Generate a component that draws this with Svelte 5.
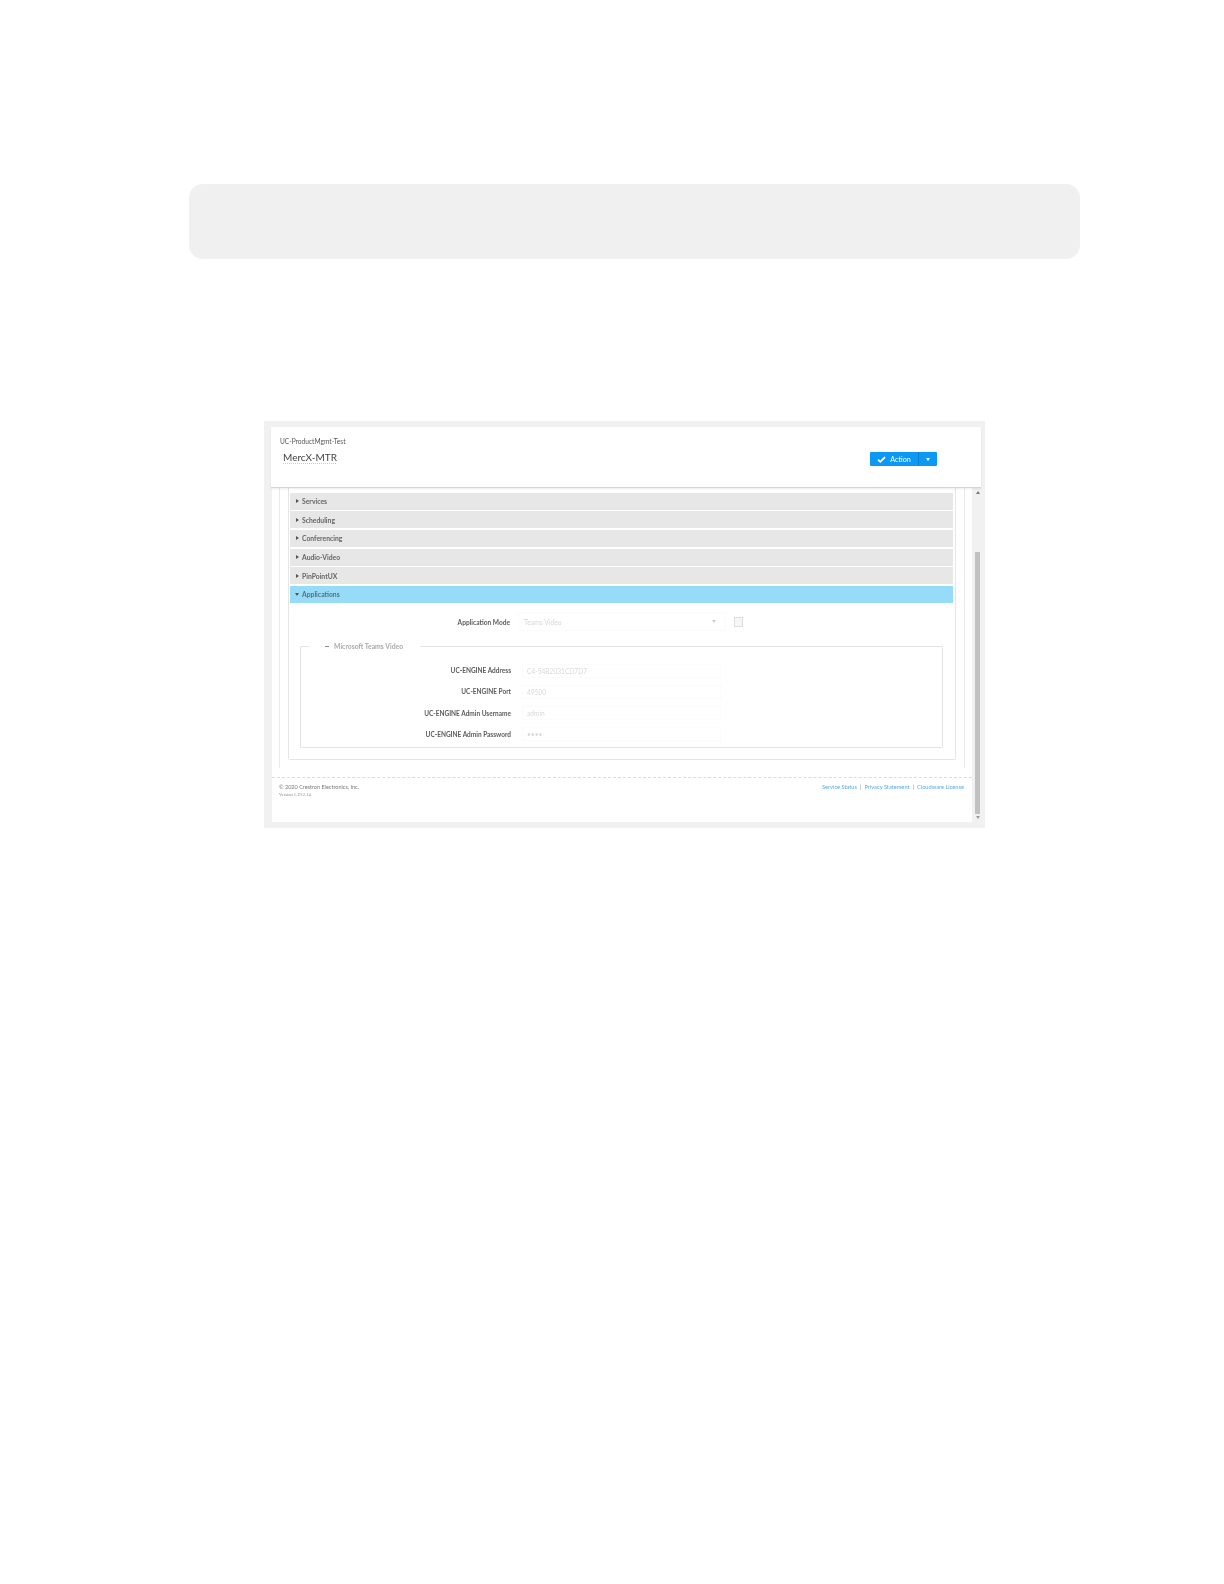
<script lang="ts">
    const sections = ["Services", "Scheduling", "Conferencing", "Audio-Video", "PinPointUX"];

    const fields = [
        { label: "UC-ENGINE Address", value: "C4-54B2031CD7D7" },
        { label: "UC-ENGINE Port", value: "49500" },
        { label: "UC-ENGINE Admin Username", value: "admin" },
        { label: "UC-ENGINE Admin Password", value: "••••" },
    ];
</script>

<div class="page">
    <div class="banner"></div>

    <div class="window">
        <div class="inner">
            <header class="header">
                <div class="titles">
                    <div class="group">UC-ProductMgmt-Test</div>
                    <div class="name"><span>MercX-MTR</span></div>
                </div>
                <div class="action">
                    <button class="action-main">
                        <svg width="9" height="7" viewBox="0 0 9 7">
                            <path d="M1 3.6 3.3 5.8 8 1.2" fill="none" stroke="#fff" stroke-width="1.8" />
                        </svg>
                        Action
                    </button>
                    <button class="action-more" aria-label="More actions"><i class="caret-down white"></i></button>
                </div>
            </header>

            <div class="body">
                <div class="content">
                    <div class="scroll-area">
                        <div class="panel">
                            {#each sections as section}
                                <div class="row"><i class="caret-right"></i>{section}</div>
                            {/each}
                            <div class="row active"><i class="caret-down"></i>Applications</div>

                            <div class="mode-row">
                                <span class="mode-label">Application Mode</span>
                                <div class="select">
                                    <span>Teams Video</span>
                                    <i class="caret-down faint"></i>
                                </div>
                                <input class="check" type="checkbox" disabled />
                            </div>

                            <fieldset class="group-box">
                                <legend>
                                    <span class="minus"></span>
                                    Microsoft Teams Video
                                </legend>
                                {#each fields as field}
                                    <div class="field">
                                        <label for={field.label}>{field.label}</label>
                                        <input id={field.label} value={field.value} readonly />
                                    </div>
                                {/each}
                            </fieldset>
                        </div>
                    </div>

                    <footer class="footer">
                        <div>
                            <div class="copyright">© 2020 Crestron Electronics, Inc.</div>
                            <div class="version">Version 1.19.2.14</div>
                        </div>
                        <div class="links">
                            <a href="#status">Service Status</a>
                            <span>|</span>
                            <a href="#privacy">Privacy Statement</a>
                            <span>|</span>
                            <a href="#license">Cloudware License</a>
                        </div>
                    </footer>
                </div>

                <div class="scrollbar">
                    <i class="arrow-up"></i>
                    <div class="thumb"></div>
                    <i class="arrow-down"></i>
                </div>
            </div>
        </div>
    </div>
</div>

<style>
    :global(body) {
        margin: 0;
        background: #fff;
    }

    .page {
        padding-top: 184px;
        font-family: Lato, "Open Sans", sans-serif;
    }

    .banner {
        margin-left: 189px;
        width: 891px;
        height: 75px;
        background: #f0f0f0;
        border-radius: 14px;
    }

    .window {
        margin: 162px 0 0 264px;
        width: 721px;
        height: 407px;
        box-sizing: border-box;
        padding: 6px 4px 6px 7px;
        background: #f1f1f1;
        filter: blur(0.5px);
    }

    .inner {
        height: 100%;
        display: flex;
        flex-direction: column;
    }

    .header {
        position: relative;
        z-index: 1;
        height: 61px;
        box-sizing: border-box;
        flex: none;
        display: flex;
        justify-content: space-between;
        padding: 9px 44px 0 9px;
        background: #fff;
        border-bottom: 1px solid #d4d4d4;
        box-shadow: 0 1px 2px rgba(0, 0, 0, 0.08);
    }

    .group {
        font-size: 6.6px;
        line-height: 11px;
        color: #555;
    }

    .name {
        margin: 2px 0 0 3px;
        font-size: 10px;
        line-height: 16px;
        color: #444;
    }

    .name span {
        text-decoration: underline dotted #a8d2ee 1px;
        text-underline-offset: 2px;
    }

    .action {
        display: flex;
        margin-top: 16px;
        height: 14px;
    }

    .action button {
        border: none;
        padding: 0;
        height: 14px;
        background: #0a99f5;
        color: #fff;
        font-family: inherit;
        font-size: 7.2px;
        font-weight: 400;
        display: flex;
        align-items: center;
        justify-content: center;
    }

    .action-main {
        width: 49px;
        gap: 4px;
        border-radius: 1px 0 0 1px;
        border-right: 1px solid #0c7fcb !important;
    }

    .action-more {
        width: 18px;
        border-radius: 0 1px 1px 0;
    }

    .body {
        flex: 1;
        display: flex;
        min-height: 0;
        padding-left: 1px;
    }

    .content {
        flex: 1;
        min-width: 0;
        background: #fff;
    }

    .scroll-area {
        height: 280px;
        box-sizing: border-box;
        margin: 0 7px;
        padding: 0 8px;
        border-left: 1px solid #e9e9e9;
        border-right: 1px solid #e9e9e9;
    }

    .panel {
        height: 272px;
        box-sizing: border-box;
        padding: 4.6px 2px 0 1px;
        border: 1px solid #e6e6e6;
        border-top: none;
        border-radius: 0 0 2px 2px;
    }

    .row {
        height: 17px;
        margin-bottom: 1.68px;
        padding-left: 6px;
        display: flex;
        align-items: center;
        gap: 3px;
        background: #e7e7e7;
        font-size: 6.8px;
        font-weight: 700;
        color: #666;
    }

    .row.active {
        margin-bottom: 0;
        padding-left: 5px;
        background: #96dbf7;
        color: #55707c;
        gap: 3px;
    }

    .caret-right {
        width: 0;
        height: 0;
        border-top: 2.5px solid transparent;
        border-bottom: 2.5px solid transparent;
        border-left: 3px solid #555;
    }

    .caret-down {
        width: 0;
        height: 0;
        border-left: 2.5px solid transparent;
        border-right: 2.5px solid transparent;
        border-top: 3px solid #555;
    }

    .caret-down.white {
        border-top-color: #fff;
    }

    .caret-down.faint {
        border-top-color: #ccc;
    }

    .mode-row {
        margin-top: 9px;
        height: 20px;
        display: flex;
        align-items: center;
    }

    .mode-label {
        width: 220px;
        text-align: right;
        font-size: 6.6px;
        font-weight: 700;
        color: #5c5c5c;
    }

    .select {
        margin-left: 8px;
        width: 208px;
        height: 19px;
        box-sizing: border-box;
        padding: 0 9px 0 5px;
        display: flex;
        align-items: center;
        justify-content: space-between;
        border: 1px solid #fbfbfb;
        font-size: 6.8px;
        color: #d8d8d8;
    }

    .check {
        appearance: none;
        margin: 0 0 0 8px;
        width: 9px;
        height: 10px;
        border: 1px solid #ddd;
        background: #f7f7f7;
    }

    .group-box {
        margin: 10px 0 0 10px;
        padding: 0;
        width: 643px;
        height: 106px;
        box-sizing: border-box;
        border: 1px solid #e4e4e4;
        border-radius: 1px;
    }

    legend {
        margin-left: 8px;
        padding: 0 17px 0 16px;
        font-size: 6.8px;
        font-weight: 700;
        line-height: 9px;
        color: #aaa;
        display: flex;
        align-items: center;
        gap: 5px;
    }

    .minus {
        width: 4px;
        height: 1px;
        background: #888;
    }

    .field {
        height: 21.1px;
        display: flex;
        align-items: center;
    }

    .field:first-of-type {
        margin-top: 9.4px;
    }

    .field label {
        width: 210px;
        text-align: right;
        font-size: 6.5px;
        font-weight: 700;
        color: #5c5c5c;
    }

    .field input {
        margin-left: 11px;
        width: 199px;
        height: 14px;
        box-sizing: border-box;
        padding: 0 4px;
        border: 1px solid #fbfbfb;
        outline: none;
        font-family: inherit;
        font-size: 6.6px;
        color: #d8d8d8;
    }

    .footer {
        margin-top: 9px;
        padding: 5px 8px 0 7px;
        display: flex;
        justify-content: space-between;
        border-top: 1px dashed #dcdcdc;
    }

    .copyright {
        font-size: 5.5px;
        line-height: 8px;
        color: #777;
    }

    .version {
        font-family: "Liberation Serif", serif;
        font-size: 4.5px;
        line-height: 8px;
        color: #888;
    }

    .links {
        display: flex;
        gap: 3px;
        font-size: 5.7px;
        line-height: 8px;
        color: #888;
    }

    .links a {
        color: #5aa9e6;
        text-decoration: none;
    }

    .scrollbar {
        width: 9px;
        flex: none;
        position: relative;
        background: #f1f1f1;
    }

    .thumb {
        margin: 64px 1px 0 3px;
        height: 262px;
        background: #c1c1c1;
    }

    .arrow-up,
    .arrow-down {
        position: absolute;
        left: 4px;
        width: 0;
        height: 0;
        border-left: 2px solid transparent;
        border-right: 2px solid transparent;
    }

    .arrow-up {
        top: 3px;
        border-bottom: 3px solid #777;
    }

    .arrow-down {
        bottom: 3px;
        border-top: 3px solid #999;
    }
</style>
